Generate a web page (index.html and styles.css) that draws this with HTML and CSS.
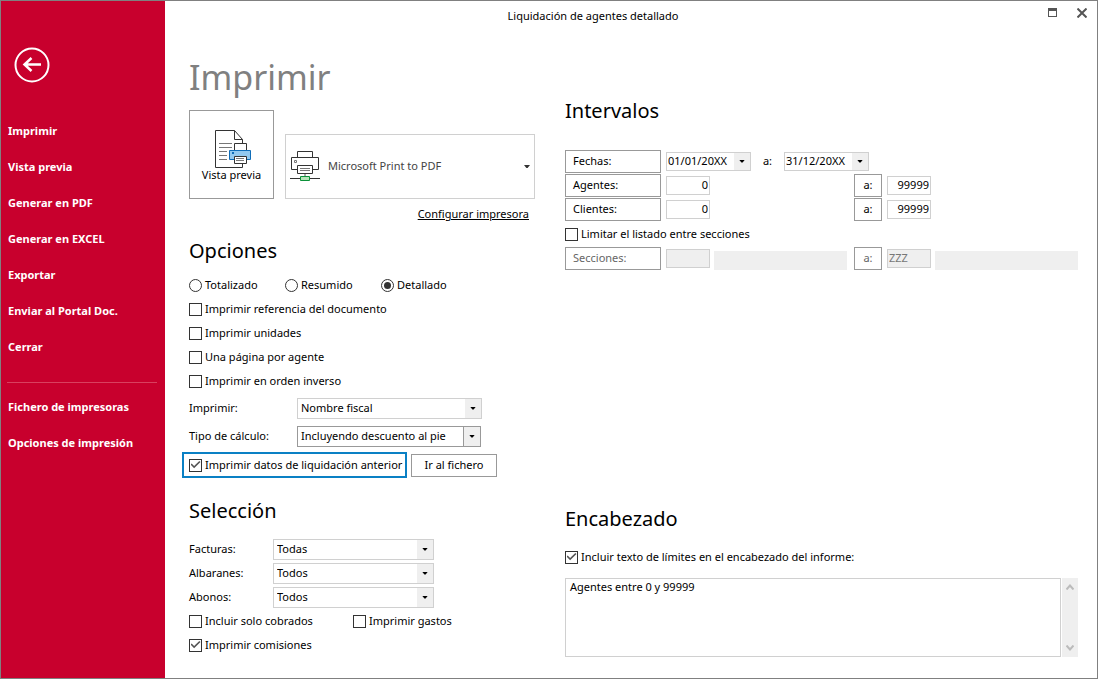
FILE: index.html
```html
<!DOCTYPE html>
<html lang="es">
<head>
<meta charset="utf-8">
<title>Liquidación de agentes detallado</title>
<link rel="stylesheet" href="styles.css">
</head>
<body>
<div class="window">
  <nav class="sidebar">
    <button class="back" type="button" aria-label="Volver">
      <svg width="36" height="36" viewBox="0 0 36 36" fill="none" stroke="#fff" stroke-width="2"><circle cx="18" cy="18" r="16.500"/><path d="M10 17.500H27M17.500 11l-7 6.500 7 6.500" stroke-width="2.500"/></svg>
    </button>
    <a href="#imprimir">Imprimir</a>
    <a href="#vista">Vista previa</a>
    <a href="#pdf">Generar en PDF</a>
    <a href="#excel">Generar en EXCEL</a>
    <a href="#exportar">Exportar</a>
    <a href="#portal">Enviar al Portal Doc.</a>
    <a href="#cerrar">Cerrar</a>
    <hr>
    <a href="#impresoras">Fichero de impresoras</a>
    <a href="#opciones">Opciones de impresión</a>
  </nav>
  <div class="content">
    <header class="titlebar">
      <span class="caption">Liquidación de agentes detallado</span>
      <div class="controls">
        <button type="button" aria-label="Maximizar"><svg width="9" height="10" viewBox="0 0 9 10" shape-rendering="crispEdges"><path d="M.5 1V8.500H8.500V1" fill="none" stroke="#555"/><path d="M0 0h9v3H0z" fill="#555"/></svg></button>
        <button type="button" aria-label="Cerrar"><svg width="10" height="10" viewBox="0 0 10 10"><path d="M.5.5l9 9M9.500.5l-9 9" stroke="#555" stroke-width="2"/></svg></button>
      </div>
    </header>
    <main class="columns">
      <div class="left">
        <h1>Imprimir</h1>
        <div class="printer-row">
          <button class="preview" type="button">
            <svg width="37" height="39" viewBox="0 0 37 39" fill="none" stroke="#333"><path d="M19.500.5H.5V37.500H27.500V34M19.500.5V9.500H27.500V13M19.500.5l8 9" fill="#fff"/><path d="M4 13.500H17M4 17.500H17M4 21.500H12M4 25.500H12M4 29.500H12" stroke="#777"/><path d="M19.500 20V13.500H31.500V20" fill="#fff"/><path d="M14.500 20.500H35.500V29.500H14.500z" fill="#92c9ef" stroke="#0f6db8"/><path d="M17 22h2v2h-2z" fill="#0f6db8" stroke="none"/><path d="M19.500 26.500H31.500V33.500H19.500z" fill="#fff"/><path d="M21 28.500H29M21 30.500H29" stroke="#777"/></svg>
            <span>Vista previa</span>
          </button>
          <div class="printer">
            <svg class="printer-icon" width="30" height="31" viewBox="0 0 30 31" fill="none" stroke="#333"><path d="M7.500 6V.5H22.500V6M7.500 18.500H1.500V6.500H28.500V18.500H22.500"/><path d="M4.500 9.500h2v2h-2z" stroke="#777"/><path d="M7.500 14.500H22.500V22.500H7.500z" fill="#fff"/><path d="M10 17.500H20M10 19.500H20" stroke="#777"/><path d="M15 23v2" stroke="#aaa" stroke-width="2"/><path d="M0 27.500H10M20 27.500H30"/><path d="M10.500 25.500H19.500V29.500H10.500z" fill="#b5e4b8" stroke="#0b9139"/></svg>
            <select aria-label="Impresora"><option>Microsoft Print to PDF</option></select>
          </div>
        </div>
        <a class="configure" href="#configurar">Configurar impresora</a>

        <section>
          <h2>Opciones</h2>
          <div class="radios">
            <label class="tick"><input type="radio" name="modo">Totalizado</label>
            <label class="tick"><input type="radio" name="modo">Resumido</label>
            <label class="tick"><input type="radio" name="modo" checked>Detallado</label>
          </div>
          <label class="tick"><input type="checkbox">Imprimir referencia del documento</label>
          <label class="tick"><input type="checkbox">Imprimir unidades</label>
          <label class="tick"><input type="checkbox">Una página por agente</label>
          <label class="tick"><input type="checkbox">Imprimir en orden inverso</label>
          <div class="field option-field">
            <label for="nombre">Imprimir:</label>
            <div class="combo"><select id="nombre"><option>Nombre fiscal</option></select></div>
          </div>
          <div class="field option-field">
            <label for="calculo">Tipo de cálculo:</label>
            <div class="combo strong"><select id="calculo"><option>Incluyendo descuento al pie</option></select></div>
          </div>
          <div class="previous">
            <label class="tick highlight"><input type="checkbox" checked>Imprimir datos de liquidación anterior</label>
            <button class="box file-button" type="button">Ir al fichero</button>
          </div>
        </section>

        <section class="selection">
          <h2>Selección</h2>
          <div class="field"><label for="facturas">Facturas:</label><div class="combo"><select id="facturas"><option>Todas</option></select></div></div>
          <div class="field"><label for="albaranes">Albaranes:</label><div class="combo"><select id="albaranes"><option>Todos</option></select></div></div>
          <div class="field"><label for="abonos">Abonos:</label><div class="combo"><select id="abonos"><option>Todos</option></select></div></div>
          <div class="pair">
            <label class="tick"><input type="checkbox">Incluir solo cobrados</label>
            <label class="tick"><input type="checkbox">Imprimir gastos</label>
          </div>
          <label class="tick"><input type="checkbox" checked>Imprimir comisiones</label>
        </section>
      </div>

      <div class="right">
        <section>
          <h2>Intervalos</h2>
          <div class="range dates">
            <button class="box" type="button">Fechas:</button>
            <div class="combo date"><select aria-label="Fecha inicial"><option>01/01/20XX</option></select></div>
            <span class="to">a:</span>
            <div class="combo date"><select aria-label="Fecha final"><option>31/12/20XX</option></select></div>
          </div>
          <div class="range">
            <button class="box" type="button">Agentes:</button>
            <input class="number" type="text" value="0" aria-label="Agente inicial">
            <span></span>
            <button class="box" type="button">a:</button>
            <input class="number" type="text" value="99999" aria-label="Agente final">
          </div>
          <div class="range">
            <button class="box" type="button">Clientes:</button>
            <input class="number" type="text" value="0" aria-label="Cliente inicial">
            <span></span>
            <button class="box" type="button">a:</button>
            <input class="number" type="text" value="99999" aria-label="Cliente final">
          </div>
          <label class="tick limit"><input type="checkbox">Limitar el listado entre secciones</label>
          <div class="range">
            <button class="box" type="button" disabled>Secciones:</button>
            <input class="code" type="text" disabled aria-label="Sección inicial">
            <span class="description"></span>
            <button class="box" type="button" disabled>a:</button>
            <input class="code" type="text" value="ZZZ" disabled aria-label="Sección final">
            <span class="description"></span>
          </div>
        </section>
        <section>
          <h2>Encabezado</h2>
          <label class="tick"><input type="checkbox" checked>Incluir texto de límites en el encabezado del informe:</label>
          <div class="memo">
            <textarea aria-label="Texto del encabezado">Agentes entre 0 y 99999</textarea>
            <div class="scroll">
              <svg width="8" height="6" viewBox="0 0 8 6" fill="none" stroke="#bbb" stroke-width="2"><path d="M0.500 5.500L4 1.500 7.500 5.500"/></svg>
              <svg width="8" height="6" viewBox="0 0 8 6" fill="none" stroke="#bbb" stroke-width="2"><path d="M0.500.5L4 4.500 7.500.5"/></svg>
            </div>
          </div>
        </section>
      </div>
    </main>
  </div>
</div>
</body>
</html>
```

FILE: styles.css
```css
* { box-sizing: border-box; }

body {
  margin: 0;
  background: #fff;
  color: #000;
  font: 11px/16px "Noto Sans", "Open Sans", sans-serif;
}

button, input, select, textarea {
  margin: 0;
  font: inherit;
  color: inherit;
  appearance: none;
  border-radius: 0;
}

button { padding: 0; border: 0; background: none; }
svg { display: block; }

.window {
  display: grid;
  grid-template-columns: 164px 1fr;
  min-height: 100vh;
  border: 1px solid #808080;
}

/* Sidebar */
.sidebar {
  display: flex;
  flex-direction: column;
  padding: 46px 8px 0 6px;
  background: #c8002d;
  color: #fff;
  font-weight: 700;
}

.back { align-self: start; margin: 0 0 30px 7px; }
.sidebar a { padding-left: 1px; line-height: 36px; color: inherit; text-decoration: none; white-space: nowrap; }
.sidebar hr { width: 100%; margin: 17px 0 6px; border: 0; border-top: 1px solid #d9405f; }

/* Title bar */
.content { display: flex; flex-direction: column; min-width: 0; }
.titlebar { display: grid; grid-template-columns: 1fr 76px; height: 30px; }
.caption { text-align: center; line-height: 30px; }
.controls { display: flex; justify-content: flex-end; align-items: flex-start; gap: 20px; padding: 7px 10px 0 0; }

.columns {
  flex: 1;
  display: grid;
  grid-template-columns: 352px 1fr;
  column-gap: 24px;
  padding: 0 19px 21px 24px;
}

h1, h2 { margin: 0; font-weight: 400; }
h1 { height: 79px; padding-top: 20px; font-size: 34px; line-height: 52px; color: #808080; }
h2 { font-size: 20px; line-height: 28px; }

/* Printer */
.printer-row { display: flex; align-items: flex-end; gap: 11px; }

.preview {
  display: flex;
  flex-direction: column;
  align-items: center;
  width: 85px;
  height: 89px;
  padding-top: 19px;
  border: 1px solid #999;
}

.preview svg { margin: 0 -4px -2px 0; }

.printer { display: grid; width: 250px; height: 65px; }
.printer > *, .printer::after { grid-area: 1 / 1; }
.printer-icon { align-self: center; margin-left: 5px; pointer-events: none; z-index: 1; }

.printer select {
  padding: 0 20px 1px 42px;
  border: 1px solid #d0d0d0;
  background: #fff;
  color: #444;
}

.configure { display: block; width: fit-content; margin: 7px 12px 15px auto; color: #000; }

/* Tick boxes and radios */
.tick { display: flex; align-items: center; gap: 3px; height: 24px; white-space: nowrap; }

.tick input {
  display: grid;
  place-items: center;
  flex: none;
  width: 13px;
  height: 13px;
  border: 1px solid #333;
  background: #fff;
}

.tick input[type="radio"] { border-radius: 50%; }
.tick input[type="radio"]:checked::before { content: ""; width: 7px; height: 7px; border-radius: 50%; background: #333; }

.tick input[type="checkbox"]:checked::before {
  content: "";
  width: 10px;
  height: 8px;
  background: #555;
  clip-path: polygon(0 45%, 12% 32%, 36% 62%, 88% 0, 100% 14%, 36% 92%);
}

.radios { display: grid; grid-template-columns: 96px 96px 1fr; margin-top: 8px; }

/* Combos */
.combo { display: grid; height: 21px; }
.combo > *, .combo::before, .combo::after { grid-area: 1 / 1; }
.combo select { width: 100%; padding: 0 18px 0 3px; border: 1px solid #d0d0d0; background: #fff; }
.combo::before { content: ""; justify-self: end; width: 16px; margin: 1px; background: #efefef; pointer-events: none; z-index: 1; }

.combo::after, .printer::after {
  content: "";
  place-self: center end;
  width: 6px;
  height: 3px;
  margin-right: 6px;
  background: #000;
  clip-path: polygon(0 0, 100% 0, 60% 100%, 40% 100%);
  pointer-events: none;
  z-index: 2;
}

.printer::after { margin-right: 5px; background: #333; }
.combo.strong { width: 184px; }
.combo.strong select { border-color: #999; }
.combo.strong::before { width: 16px; border-left: 1px solid #999; }

.field { display: grid; grid-template-columns: 84px 161px; align-items: center; height: 24px; }
.option-field { grid-template-columns: 108px 185px; height: 28px; }
.tick + .option-field { margin-top: 1px; }

.previous { display: flex; align-items: center; gap: 4px; margin: 2px 0 0 -7px; }
.highlight { width: 225px; height: 26px; padding-left: 5px; border: 2px solid #0a80c4; }
.box { height: 23px; border: 1px solid #999; background: #fff; }
.box:disabled { color: #666; }
.file-button { width: 86px; }

.selection { margin-top: 19px; }
.selection h2 { margin-bottom: 12px; }
.pair { display: grid; grid-template-columns: 164px 1fr; }

/* Ranges */
.right { display: flex; flex-direction: column; justify-content: space-between; padding-top: 66px; }
.right h2 { margin-bottom: 24px; }
.right section + section h2 { margin-bottom: 12px; }

.range {
  display: grid;
  grid-template-columns: 101px 48px 140px 33px 48px 1fr;
  align-items: center;
  height: 24px;
}

.range.dates { grid-template-columns: 101px 85px 33px 85px; }
.range .box { margin-right: 5px; }
.range .box:first-child { padding-left: 7px; text-align: left; }
.date { height: 19px; }
.date select { padding-left: 1px; }
.to { text-align: center; }

.number, .code { width: 44px; height: 19px; padding: 0 1px 1px; border: 1px solid #d0d0d0; background: #fff; }
.number { text-align: right; }
.code:disabled { background: #efefef; color: #777; }
.description { height: 19px; align-self: end; background: #efefef; }
.description:not(:last-child) { margin-right: 7px; }
.limit { margin: 1px 0 0; }

/* Heading text */
.memo { display: flex; gap: 1px; height: 79px; margin-top: 9px; }
.memo textarea { flex: 1; padding: 0 4px; border: 1px solid #d0d0d0; resize: none; outline: 0; overflow: hidden; }
.scroll { display: flex; flex-direction: column; justify-content: space-between; align-items: center; width: 16px; padding: 6px 0; background: #efefef; }
```
